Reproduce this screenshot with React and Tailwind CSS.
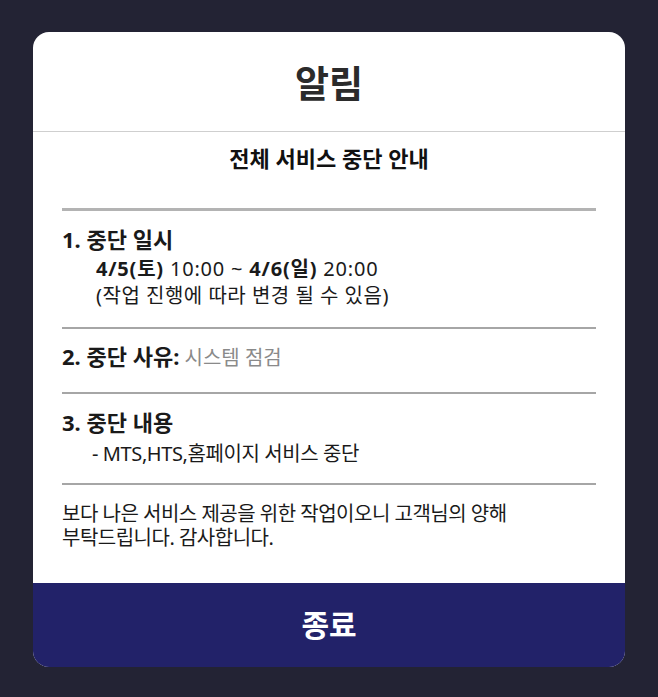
export default function App() {
  const font = { fontFamily: '"Noto Sans", "Noto Sans CJK KR", sans-serif' };
  return (
    <div className="min-h-[697px] w-full bg-[#232334] pt-[32px]" style={font}>
      <div className="mx-auto w-[592px] h-[635px] bg-white rounded-[16px] overflow-hidden flex flex-col">
        <div className="h-[100px] flex items-center justify-center border-b border-[#cfcfcf]">
          <span className="text-[37px] font-bold text-[#2b2b2b] leading-none mt-[3px]">알림</span>
        </div>
        <div className="flex-1 px-[29px]">
          <div className="pt-[12px] leading-[28px] text-[22px] font-bold text-[#111] text-center">
            전체 서비스 중단 안내
          </div>
          <div className="mt-[36px] h-[3px] bg-[#b3b3b3]" />
          <div className="pt-[14px] pb-[18px] text-[20px] text-[#1a1a1a]">
            <div className="leading-[28px] font-bold text-[22px]">1. 중단 일시</div>
            <div className="mt-[2px] pl-[34px] leading-[27px]">
              <div className="tracking-[0.8px]">
                <span className="font-bold">4/5(토)</span> 10:00 ~ <span className="font-bold">4/6(일)</span> 20:00
              </div>
              <div className="tracking-[0.5px]">(작업 진행에 따라 변경 될 수 있음)</div>
            </div>
          </div>
          <div className="h-[2px] bg-[#a6a6a6]" />
          <div className="pt-[13px] pb-[20px] leading-[28px] text-[20px]">
            <span className="font-bold text-[22px] text-[#1a1a1a]">2. 중단 사유:</span>{" "}
            <span className="text-[#8a8a8a]">시스템 점검</span>
          </div>
          <div className="h-[2px] bg-[#a6a6a6]" />
          <div className="pt-[14px] pb-[16px] text-[20px] text-[#1a1a1a]">
            <div className="leading-[28px] font-bold text-[22px]">3. 중단 내용</div>
            <div className="mt-[4px] pl-[30px] leading-[27px] tracking-[-0.4px]">- MTS,HTS,홈페이지 서비스 중단</div>
          </div>
          <div className="h-[2px] bg-[#a6a6a6]" />
          <div className="pt-[17px] text-[20px] leading-[24px] text-[#1a1a1a] tracking-[-0.5px]">
            보다 나은 서비스 제공을 위한 작업이오니 고객님의 양해
            <br />
            부탁드립니다. 감사합니다.
          </div>
        </div>
        <div className="h-[84px] bg-[#222269] flex items-center justify-center">
          <span className="text-[30px] font-bold text-white leading-none">종료</span>
        </div>
      </div>
    </div>
  );
}
